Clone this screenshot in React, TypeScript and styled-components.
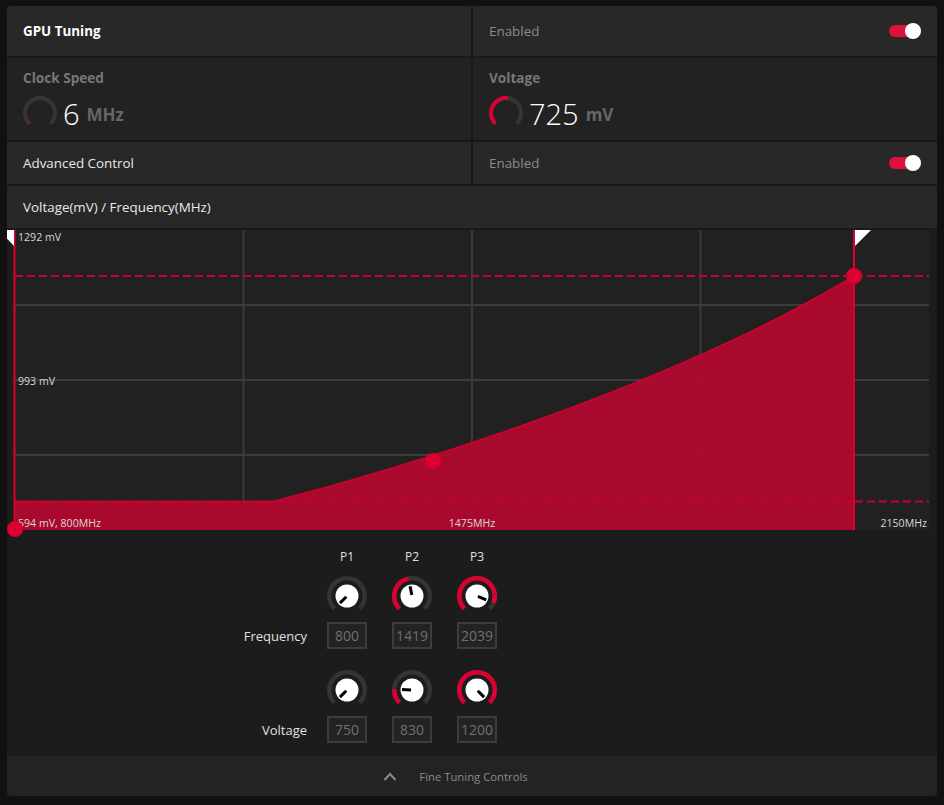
import React from 'react';
import styled, { createGlobalStyle } from 'styled-components';

const GlobalStyle = createGlobalStyle`
  html, body { margin: 0; padding: 0; background: #111111; }
  body { font-family: "Open Sans", "Noto Sans", sans-serif; }
`;

const RED = '#dc0030';

const Page = styled.div`
  padding: 6px 7px 9px 7px;
`;

const Panel = styled.div`
  width: 930px;
  background: #1c1c1c;
  border-radius: 4px;
  overflow: hidden;
  display: flex;
  flex-direction: column;
`;

const TopGrid = styled.div`
  display: grid;
  grid-template-columns: 464px 464px;
  gap: 2px;
  background: #191919;
  padding-bottom: 2px;
`;

const BarCell = styled.div<{ $span?: boolean }>`
  height: 42px;
  box-sizing: border-box;
  padding: 0 16px;
  background: #282828;
  display: flex;
  align-items: center;
  justify-content: space-between;
  grid-column: ${(p) => (p.$span ? '1 / -1' : 'auto')};
  &.tall { height: 50px; }
`;

const MetricCell = styled.div`
  height: 82px;
  box-sizing: border-box;
  padding: 10px 16px 0 16px;
  background: #222222;
  display: flex;
  flex-direction: column;
`;

const Title = styled.span`
  font-size: 13.4px;
  font-weight: 700;
  color: #ffffff;
`;

const RowLabel = styled.span`
  font-size: 13.4px;
  color: #e8e8e8;
`;

const Muted = styled.span`
  font-size: 13.4px;
  color: #8a8a8a;
`;

const MetricTitle = styled.span`
  font-size: 13.6px;
  line-height: 20px;
  font-weight: 700;
  color: #777777;
`;

const MetricValue = styled.div`
  margin-top: 6px;
  height: 38px;
  display: flex;
  align-items: center;
`;

const BigNum = styled.span`
  margin-left: 6px;
  font-size: 29px;
  font-weight: 300;
  color: #ffffff;
`;

const Unit = styled.span`
  margin-left: 7px;
  margin-top: 3px;
  font-size: 17px;
  font-weight: 700;
  color: #666666;
`;

const Track = styled.div`
  width: 32px;
  height: 12px;
  border-radius: 6px;
  background: #e0103a;
  display: flex;
  align-items: center;
  justify-content: flex-end;
`;

const Thumb = styled.div`
  width: 16px;
  height: 16px;
  flex: none;
  border-radius: 50%;
  background: #ffffff;
`;

const Toggle = () => (
  <Track>
    <Thumb />
  </Track>
);

/* ---------- arc helpers ---------- */
const pt = (cx: number, cy: number, r: number, deg: number) => {
  const a = (deg * Math.PI) / 180;
  return [cx + r * Math.sin(a), cy - r * Math.cos(a)];
};
const arc = (cx: number, cy: number, r: number, from: number, to: number) => {
  const [x1, y1] = pt(cx, cy, r, from);
  const [x2, y2] = pt(cx, cy, r, to);
  const large = to - from > 180 ? 1 : 0;
  return `M${x1.toFixed(2)},${y1.toFixed(2)} A${r},${r} 0 ${large} 1 ${x2.toFixed(2)},${y2.toFixed(2)}`;
};

const Gauge = ({ f }: { f: number }) => (
  <svg width={34} height={34} viewBox="0 0 34 34">
    <path d={arc(17, 17, 15, -135, 135)} stroke="#353535" strokeWidth={4} fill="none" />
    {f > 0 && <path d={arc(17, 17, 15, -135, -135 + 270 * f)} stroke={RED} strokeWidth={4} fill="none" />}
  </svg>
);

const Knob = ({ f }: { f: number }) => {
  const ang = -135 + 270 * f;
  const [ax, ay] = pt(20, 20, 1, ang);
  const [bx, by] = pt(20, 20, 10, ang);
  return (
    <svg width={40} height={40} viewBox="0 0 40 40">
      <path d={arc(20, 20, 17.75, -135, 135)} stroke="#343434" strokeWidth={4.5} fill="none" />
      {f > 0 && <path d={arc(20, 20, 17.75, -135, ang)} stroke={RED} strokeWidth={4.5} fill="none" />}
      <circle cx={20} cy={20} r={11.5} fill="#ffffff" />
      <line x1={ax} y1={ay} x2={bx} y2={by} stroke="#000" strokeWidth={3} />
    </svg>
  );
};

/* ---------- chart ---------- */
const ChartArea = styled.div`
  margin: 0 8px;
  height: 300px;
  background: #212121;
  position: relative;
  z-index: 1;
  svg { display: block; overflow: visible; }
`;

const W = 914;
const H = 300;
const FLAT = 271.5;
const CURVE = `M0,${FLAT} L258,${FLAT} C380,240 650,160 839,46`;

const Chart = () => (
  <ChartArea>
    <svg width={W} height={H}>
      {[1, 2, 3].map((i) => (
        <line key={'v' + i} x1={(i * W) / 4} y1={0} x2={(i * W) / 4} y2={H} stroke="#3b3b3b" strokeWidth={2} />
      ))}
      {[1, 2, 3].map((i) => (
        <line key={'h' + i} x1={0} y1={i * 75} x2={W} y2={i * 75} stroke="#3b3b3b" strokeWidth={2} />
      ))}
      <path d={`${CURVE} L839,${H} L0,${H} Z`} fill="#b4082d" fillOpacity={0.93} />
      <path d={CURVE} stroke="#d2002e" strokeWidth={1.5} fill="none" />
      <line x1={0} y1={46} x2={W} y2={46} stroke="#c8002e" strokeWidth={2} strokeDasharray="8 4" />
      <line x1={0} y1={FLAT} x2={W} y2={FLAT} stroke="#cc002f" strokeWidth={2} strokeDasharray="8 4" />
      <line x1={-0.5} y1={0} x2={-0.5} y2={H} stroke={RED} strokeWidth={2} />
      <line x1={839} y1={0} x2={839} y2={H} stroke={RED} strokeWidth={2} />
      <polygon points="-16,0 -1,0 -1,16" fill="#ffffff" />
      <polygon points="840,0 856,0 840,16" fill="#ffffff" />
      <g fontFamily='"Open Sans", "Noto Sans", sans-serif' fontSize={10.6} fill="#d8d8d8">
        <text x={3} y={11}>1292 mV</text>
        <text x={3} y={155}>993 mV</text>
        <text x={3} y={297}>594 mV, 800MHz</text>
        <text x={457} y={297} textAnchor="middle">1475MHz</text>
        <text x={912} y={297} textAnchor="end">2150MHz</text>
      </g>
      <circle cx={0} cy={299} r={8} fill={RED} />
      <circle cx={418} cy={231} r={8} fill={RED} />
      <circle cx={839} cy={46} r={8} fill={RED} />
    </svg>
  </ChartArea>
);

/* ---------- tuning knobs ---------- */
const Tuning = styled.div`
  display: flex;
  flex-direction: column;
  padding: 18px 0 13px 200px;
`;

const TRow = styled.div<{ $gap: number; $h: number }>`
  display: flex;
  align-items: center;
  margin-top: ${(p) => p.$gap}px;
  height: ${(p) => p.$h}px;
`;

const LabelSlot = styled.div`
  width: 100px;
  margin-right: 20px;
  text-align: right;
  font-size: 13px;
  color: #e0e0e0;
`;

const Group = styled.div`
  display: flex;
  gap: 25px;
`;

const Slot = styled.div`
  width: 40px;
  display: flex;
  justify-content: center;
  font-size: 12px;
  color: #e0e0e0;
  svg { display: block; }
`;

const ValueBox = styled.div`
  width: 40px;
  height: 27px;
  box-sizing: border-box;
  border: 2px solid #3c3c3c;
  background: #232323;
  color: #707070;
  font-size: 14px;
  display: flex;
  align-items: center;
  justify-content: center;
`;

const Footer = styled.div`
  height: 40px;
  background: #232323;
  display: flex;
  align-items: center;
  justify-content: center;
  gap: 22px;
  padding-right: 33px;
  font-size: 11.3px;
  color: #8a8a8a;
`;

const freq = [
  { v: 800, f: 0 },
  { v: 1419, f: 0.4585 },
  { v: 2039, f: 0.918 },
];
const volt = [
  { v: 750, f: 0 },
  { v: 830, f: 0.178 },
  { v: 1200, f: 1 },
];

export default function App() {
  return (
    <>
      <GlobalStyle />
      <Page>
        <Panel>
          <TopGrid>
            <BarCell className="tall">
              <Title>GPU Tuning</Title>
            </BarCell>
            <BarCell className="tall">
              <Muted>Enabled</Muted>
              <Toggle />
            </BarCell>
            <MetricCell>
              <MetricTitle>Clock Speed</MetricTitle>
              <MetricValue>
                <Gauge f={0.012} />
                <BigNum>6</BigNum>
                <Unit>MHz</Unit>
              </MetricValue>
            </MetricCell>
            <MetricCell>
              <MetricTitle>Voltage</MetricTitle>
              <MetricValue>
                <Gauge f={0.53} />
                <BigNum>725</BigNum>
                <Unit>mV</Unit>
              </MetricValue>
            </MetricCell>
            <BarCell>
              <RowLabel>Advanced Control</RowLabel>
            </BarCell>
            <BarCell>
              <Muted>Enabled</Muted>
              <Toggle />
            </BarCell>
            <BarCell $span>
              <RowLabel>Voltage(mV) / Frequency(MHz)</RowLabel>
            </BarCell>
          </TopGrid>
          <Chart />
          <Tuning>
            <TRow $gap={0} $h={16}>
              <LabelSlot />
              <Group>
                <Slot>P1</Slot>
                <Slot>P2</Slot>
                <Slot>P3</Slot>
              </Group>
            </TRow>
            <TRow $gap={12} $h={40}>
              <LabelSlot />
              <Group>
                {freq.map((k) => (
                  <Slot key={k.v}>
                    <Knob f={k.f} />
                  </Slot>
                ))}
              </Group>
            </TRow>
            <TRow $gap={6} $h={27}>
              <LabelSlot>Frequency</LabelSlot>
              <Group>
                {freq.map((k) => (
                  <ValueBox key={k.v}>{k.v}</ValueBox>
                ))}
              </Group>
            </TRow>
            <TRow $gap={21} $h={40}>
              <LabelSlot />
              <Group>
                {volt.map((k) => (
                  <Slot key={k.v}>
                    <Knob f={k.f} />
                  </Slot>
                ))}
              </Group>
            </TRow>
            <TRow $gap={6} $h={27}>
              <LabelSlot>Voltage</LabelSlot>
              <Group>
                {volt.map((k) => (
                  <ValueBox key={k.v}>{k.v}</ValueBox>
                ))}
              </Group>
            </TRow>
          </Tuning>
          <Footer>
            <svg width={14} height={9} viewBox="0 0 14 9">
              <polyline points="1.5,8 7,2 12.5,8" stroke="#8a8a8a" strokeWidth={2} fill="none" />
            </svg>
            <span>Fine Tuning Controls</span>
          </Footer>
        </Panel>
      </Page>
    </>
  );
}
